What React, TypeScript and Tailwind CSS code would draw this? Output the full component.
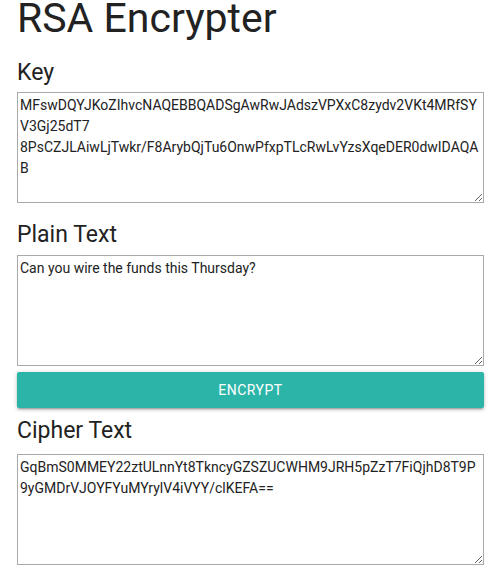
import React from "react";

const KEY =
  "MFswDQYJKoZIhvcNAQEBBQADSgAwRwJAdszVPXxC8zydv2VKt4MRfSY\nV3Gj25dT7\n8PsCZJLAiwLjTwkr/F8ArybQjTu6OnwPfxpTLcRwLvYzsXqeDER0dwIDAQA\nB";
const PLAIN = "Can you wire the funds this Thursday?";
const CIPHER =
  "GqBmS0MMEY22ztULnnYt8TkncyGZSZUCWHM9JRH5pZzT7FiQjhD8T9P\n9yGMDrVJOYFYuMYrylV4iVYY/clKEFA==";

const taClass =
  "block w-full h-[111px] border border-[#a9a9a9] px-[2px] py-[2px] text-[14px] leading-[21px] text-[#222] bg-white outline-none resize-y";

export default function App() {
  return (
    <div
      className="w-[501px] min-h-[577px] bg-white px-[17px] pt-[1px] text-[#222]"
      style={{ fontFamily: "Roboto, 'Liberation Sans', sans-serif" }}
    >
      <h1 className="text-[41px] leading-[34px] font-normal">RSA Encrypter</h1>

      <h2 className="mt-[26px] text-[23px] leading-[24px] font-normal">Key</h2>
      <textarea className={`mt-[7px] ${taClass}`} defaultValue={KEY} spellCheck={false} />

      <h2 className="mt-[20px] text-[23px] leading-[24px] font-normal">Plain Text</h2>
      <textarea className={`mt-[8px] ${taClass}`} defaultValue={PLAIN} spellCheck={false} />

      <button
        type="button"
        className="mt-[6px] block w-full h-[36px] rounded-[2px] bg-[#2bb5a8] text-white text-[14px] tracking-[0.5px] uppercase shadow-[0_2px_2px_0_rgba(0,0,0,0.14),0_3px_1px_-2px_rgba(0,0,0,0.12),0_1px_5px_0_rgba(0,0,0,0.2)]"
      >
        Encrypt
      </button>

      <h2 className="mt-[11px] text-[23px] leading-[24px] font-normal">Cipher Text</h2>
      <textarea className={`mt-[11px] ${taClass}`} defaultValue={CIPHER} spellCheck={false} />
    </div>
  );
}
